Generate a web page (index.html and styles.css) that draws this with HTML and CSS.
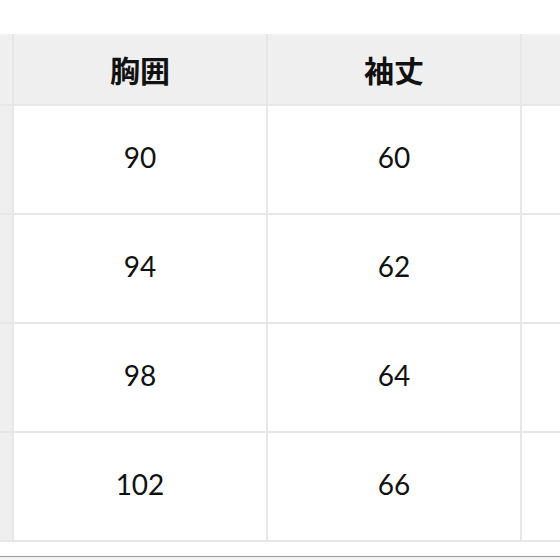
FILE: index.html
```html
<!DOCTYPE html>
<html lang="ja">
<head>
<meta charset="utf-8">
<link rel="stylesheet" href="styles.css">
</head>
<body>
<div class="page">
  <div class="wrap">
    <table class="size-table">
      <colgroup>
        <col class="col"><col class="col"><col class="col"><col class="col">
      </colgroup>
      <thead>
        <tr>
          <th class="c0"></th>
          <th>胸囲</th>
          <th>袖丈</th>
          <th class="c3"></th>
        </tr>
      </thead>
      <tbody>
        <tr><td class="rh"></td><td>90</td><td>60</td><td></td></tr>
        <tr><td class="rh"></td><td>94</td><td>62</td><td></td></tr>
        <tr><td class="rh"></td><td>98</td><td>64</td><td></td></tr>
        <tr><td class="rh"></td><td>102</td><td>66</td><td></td></tr>
      </tbody>
    </table>
  </div>
  <div class="footer-bar"></div>
</div>
</body>
</html>
```
FILE: styles.css
```css
html, body {
  margin: 0;
  padding: 0;
  background: #ffffff;
}
.page {
  width: 560px;
  height: 560px;
  overflow: hidden;
  display: flex;
  flex-direction: column;
}
.wrap {
  padding-top: 34px;
  height: 522px;
  overflow: hidden;
  flex: none;
}
.size-table {
  border-collapse: collapse;
  table-layout: fixed;
  width: 1016px;
  margin-left: -242px;
  font-family: Lato, "Noto Sans CJK JP", sans-serif;
  color: #111111;
}
.col {
  width: 254px;
}
.size-table th,
.size-table td {
  border: 2px solid #e7e7e7;
  text-align: center;
  padding: 0;
}
.size-table th {
  height: 65px;
  padding-bottom: 3px;
  background: #efefef;
  font-family: "Noto Sans CJK JP", sans-serif;
  font-weight: 700;
  font-size: 30px;
  border-top-color: #f2f2f2;
}
.size-table td {
  height: 101px;
  padding-bottom: 6px;
  font-size: 28px;
  background: #ffffff;
}
.size-table td.rh {
  background: #efefef;
}
.footer-bar {
  height: 4px;
  background: #f4f4f4;
  border-top: 1px solid #9a9a9a;
}
```
